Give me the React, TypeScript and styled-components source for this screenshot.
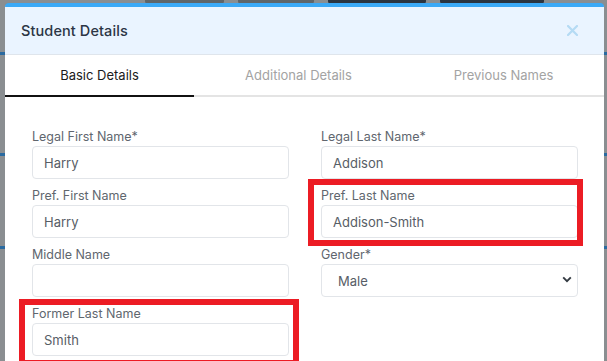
import React from 'react';
import styled, { createGlobalStyle } from 'styled-components';

const GlobalStyle = createGlobalStyle`
  html, body {
    margin: 0;
    padding: 0;
    height: 100%;
    overflow: hidden;
    font-family: Inter, "Noto Sans", "Liberation Sans", sans-serif;
  }
  * {
    box-sizing: border-box;
  }
`;

// dimmed page behind the dialog
const Backdrop = styled.div`
  position: fixed;
  inset: 0;
  background: #8a8e91;
`;

const PageToolbar = styled.div`
  display: flex;
  gap: 14px;
  padding-left: 145px;
  margin-top: -10px;
`;

const PageButton = styled.div<{ $w: number; $dark?: boolean }>`
  width: ${p => p.$w}px;
  height: 14px;
  border-radius: 3px;
  background: ${p => (p.$dark ? '#2b3440' : '#5f6569')};
`;

const PageRule = styled.div<{ $top: number }>`
  height: 3px;
  margin-top: ${p => p.$top}px;
  background: #2a6aa0;
`;

const Overlay = styled.div`
  position: fixed;
  inset: 0;
  padding: 3px 3px 0 5px;
`;

const Modal = styled.div`
  background: #ffffff;
  border-top: 4px solid #3ba9f6;
  border-radius: 4px 4px 0 0;
  height: 100%;
  overflow: hidden;
`;

const Header = styled.div`
  display: flex;
  align-items: center;
  justify-content: space-between;
  height: 48px;
  padding: 0 25px 0 16px;
  background: #eaf4ff;
  border-bottom: 1px solid #dfe5ec;
`;

const Title = styled.h2`
  margin: 0;
  font-size: 14.5px;
  font-weight: 500;
  color: #2c3545;
  letter-spacing: 0.1px;
`;

const CloseButton = styled.button`
  background: none;
  border: none;
  padding: 0;
  width: 14px;
  height: 14px;
  display: flex;
  align-items: center;
  justify-content: center;
  cursor: pointer;
`;

const Tabs = styled.div`
  display: grid;
  grid-template-columns: 189px 209px 1fr;
`;

const Tab = styled.div<{ $active?: boolean }>`
  height: 42px;
  display: flex;
  align-items: center;
  justify-content: center;
  font-size: 13px;
  color: ${p => (p.$active ? '#1b1b1b' : '#a3a3a3')};
  border-bottom: 2px solid ${p => (p.$active ? '#111111' : '#e4e4e4')};
`;

const Form = styled.div`
  display: grid;
  grid-template-columns: 257px 257px;
  column-gap: 32px;
  row-gap: 8px;
  padding: 31px 26px 0 27px;
`;

const Field = styled.div`
  position: relative;
  display: flex;
  flex-direction: column;
`;

const Label = styled.label`
  font-size: 12.5px;
  line-height: 17px;
  color: #60666e;
  margin-bottom: 1px;
`;

const Input = styled.input`
  height: 33px;
  width: 100%;
  padding: 0 11px;
  border: 1px solid #e2e5e9;
  border-radius: 4px;
  font-family: inherit;
  font-size: 13px;
  color: #575d66;
  background: #fff;
  outline: none;
`;

const SelectWrap = styled.div`
  position: relative;
`;

const Select = styled.select`
  appearance: none;
  height: 33px;
  width: 100%;
  padding: 0 12px 0 16px;
  border: 1px solid #e2e5e9;
  border-radius: 4px;
  font-family: inherit;
  font-size: 13px;
  color: #575d66;
  background: #fff;
  outline: none;
`;

const Chevron = styled.svg`
  position: absolute;
  right: 6px;
  top: 12px;
  pointer-events: none;
`;

// red annotation drawn over a field
const Highlight = styled.div<{ $t: number; $r: number; $b: number; $l: number }>`
  position: absolute;
  top: ${p => p.$t}px;
  right: ${p => p.$r}px;
  bottom: ${p => p.$b}px;
  left: ${p => p.$l}px;
  border: 6px solid #ec1c24;
  pointer-events: none;
`;

type FieldDef = {
  label: string;
  value?: string;
  select?: boolean;
  mark?: { t: number; r: number; b: number; l: number };
};

const fields: FieldDef[] = [
  { label: 'Legal First Name*', value: 'Harry' },
  { label: 'Legal Last Name*', value: 'Addison' },
  { label: 'Pref. First Name', value: 'Harry' },
  { label: 'Pref. Last Name', value: 'Addison-Smith', mark: { t: -8, r: -5, b: -8, l: -13 } },
  { label: 'Middle Name', value: '' },
  { label: 'Gender*', value: 'Male', select: true },
  { label: 'Former Last Name', value: 'Smith', mark: { t: -6, r: -10, b: -10, l: -13 } },
];

export default function App() {
  return (
    <>
      <GlobalStyle />
      <Backdrop>
        <PageToolbar>
          <PageButton $w={79} />
          <PageButton $w={76} />
          <PageButton $w={98} $dark />
          <PageButton $w={104} $dark />
        </PageToolbar>
        <PageRule $top={48} />
        <PageRule $top={98} />
        <PageRule $top={90} />
      </Backdrop>
      <Overlay>
        <Modal>
          <Header>
            <Title>Student Details</Title>
            <CloseButton aria-label="Close">
              <svg width="11" height="11" viewBox="0 0 11 11">
                <path d="M1 1L10 10M10 1L1 10" stroke="#b5dbf4" strokeWidth="2.2" strokeLinecap="round" />
              </svg>
            </CloseButton>
          </Header>
          <Tabs>
            <Tab $active>Basic Details</Tab>
            <Tab>Additional Details</Tab>
            <Tab>Previous Names</Tab>
          </Tabs>
          <Form>
            {fields.map(f => (
              <Field key={f.label}>
                <Label>{f.label}</Label>
                {f.select ? (
                  <SelectWrap>
                    <Select defaultValue={f.value}>
                      <option>Male</option>
                      <option>Female</option>
                    </Select>
                    <Chevron width="10" height="7" viewBox="0 0 10 7">
                      <path d="M1.2 1.3L5 5.1L8.8 1.3" fill="none" stroke="#333a42" strokeWidth="1.9" />
                    </Chevron>
                  </SelectWrap>
                ) : (
                  <Input defaultValue={f.value} />
                )}
                {f.mark && <Highlight $t={f.mark.t} $r={f.mark.r} $b={f.mark.b} $l={f.mark.l} />}
              </Field>
            ))}
          </Form>
        </Modal>
      </Overlay>
    </>
  );
}
